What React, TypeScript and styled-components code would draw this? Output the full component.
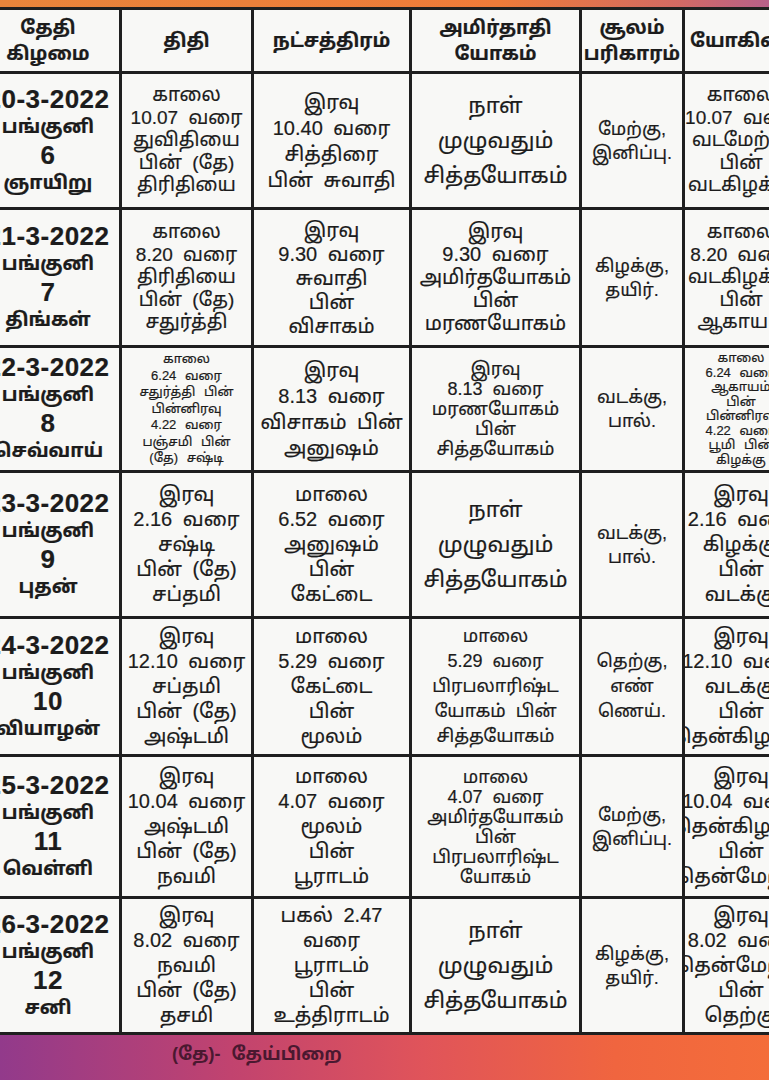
import React from 'react';
import styled, { createGlobalStyle } from 'styled-components';

const GlobalStyle = createGlobalStyle`
  html, body {
    margin: 0;
    padding: 0;
    background: #ffffff;
  }
  body {
    font-family: "Liberation Sans", "Noto Sans Tamil", "Lohit Tamil", "Noto Sans", sans-serif;
  }
`;

const Page = styled.div`
  display: flex;
  flex-direction: column;
  width: 769px;
  height: 1080px;
  overflow: hidden;
  background: #ffffff;
`;

const TopBand = styled.div`
  flex: none;
  height: 7px;
  background: linear-gradient(90deg, #e9853b 0%, #ef7b39 65%, #d36a63 88%, #b8608a 100%);
`;

// the printed table is cropped on both sides, so the frame clips it
const Frame = styled.div`
  flex: none;
  overflow: hidden;
`;

const Grid = styled.div`
  display: grid;
  grid-template-columns: 142px 129px 155px 167px 100px 112px;
  grid-template-rows: 61px 133px 135px 122px 143px 135px 139px 133px;
  gap: 3px;
  padding: 3px;
  width: max-content;
  margin-left: -26px;
  background: #1f1f1f;
`;

const Cell = styled.div<{ $size?: number; $lh?: number; $bold?: boolean }>`
  display: flex;
  flex-direction: column;
  align-items: center;
  justify-content: center;
  background: #f8f8f6;
  color: #1c1c1c;
  text-align: center;
  white-space: nowrap;
  overflow: hidden;
  font-size: ${(p) => p.$size ?? 19}px;
  line-height: ${(p) => p.$lh ?? 22.5}px;
  font-weight: ${(p) => (p.$bold ? 700 : 400)};
  word-spacing: 5px;
  -webkit-text-stroke: 0.2px #1c1c1c;
`;

const HeadCell = styled(Cell)`
  font-size: 19px;
  line-height: 26px;
  font-weight: 700;
  word-spacing: 0;
`;

const DateLine = styled.span<{ $big?: boolean }>`
  font-size: ${(p) => (p.$big ? 26 : 19)}px;
  line-height: 28px;
  font-weight: 700;
  letter-spacing: ${(p) => (p.$big ? 0.5 : 0)}px;
`;

const Footer = styled.footer`
  flex: 1;
  display: flex;
  align-items: center;
  padding-left: 172px;
  background: linear-gradient(90deg, #923a8b 0%, #c1436f 30%, #e0545a 55%, #f0653f 80%, #f46d3a 100%);
`;

const Legend = styled.span`
  font-size: 18px;
  font-weight: 700;
  color: #4a1830;
  word-spacing: 6px;
  padding-bottom: 4px;
`;

type Entry = { lines: string[]; size?: number; lh?: number };

type Day = {
  date: string;
  month: string;
  num: string;
  weekday: string;
  cells: Entry[];
};

const headers: string[][] = [
  ['தேதி', 'கிழமை'],
  ['திதி'],
  ['நட்சத்திரம்'],
  ['அமிர்தாதி', 'யோகம்'],
  ['சூலம்', 'பரிகாரம்'],
  ['யோகினி'],
];

const days: Day[] = [
  {
    date: '20-3-2022',
    month: 'பங்குனி',
    num: '6',
    weekday: 'ஞாயிறு',
    cells: [
      { lines: ['காலை', '10.07 வரை', 'துவிதியை', 'பின் (தே)', 'திரிதியை'] },
      { lines: ['இரவு', '10.40 வரை', 'சித்திரை', 'பின் சுவாதி'], size: 20, lh: 26 },
      { lines: ['நாள்', 'முழுவதும்', 'சித்தயோகம்'], size: 22, lh: 35 },
      { lines: ['மேற்கு,', 'இனிப்பு.'], size: 18, lh: 24 },
      { lines: ['காலை', '10.07 வரை', 'வடமேற்கு', 'பின்', 'வடகிழக்கு'] },
    ],
  },
  {
    date: '21-3-2022',
    month: 'பங்குனி',
    num: '7',
    weekday: 'திங்கள்',
    cells: [
      { lines: ['காலை', '8.20 வரை', 'திரிதியை', 'பின் (தே)', 'சதுர்த்தி'] },
      { lines: ['இரவு', '9.30 வரை', 'சுவாதி', 'பின்', 'விசாகம்'], size: 20, lh: 24 },
      { lines: ['இரவு', '9.30 வரை', 'அமிர்தயோகம்', 'பின்', 'மரணயோகம்'], size: 20, lh: 23 },
      { lines: ['கிழக்கு,', 'தயிர்.'], size: 18, lh: 24 },
      { lines: ['காலை', '8.20 வரை', 'வடகிழக்கு', 'பின்', 'ஆகாயம்'] },
    ],
  },
  {
    date: '22-3-2022',
    month: 'பங்குனி',
    num: '8',
    weekday: 'செவ்வாய்',
    cells: [
      {
        lines: ['காலை', '6.24 வரை', 'சதுர்த்தி பின்', 'பின்னிரவு', '4.22 வரை', 'பஞ்சமி பின்', '(தே) சஷ்டி'],
        size: 13,
        lh: 16.5,
      },
      { lines: ['இரவு', '8.13 வரை', 'விசாகம் பின்', 'அனுஷம்'], size: 20, lh: 26 },
      { lines: ['இரவு', '8.13 வரை', 'மரணயோகம்', 'பின்', 'சித்தயோகம்'], size: 18, lh: 20 },
      { lines: ['வடக்கு,', 'பால்.'], size: 18, lh: 24 },
      {
        lines: ['காலை', '6.24 வரை', 'ஆகாயம்', 'பின்', 'பின்னிரவு', '4.22 வரை', 'பூமி பின்', 'கிழக்கு'],
        size: 13,
        lh: 14.5,
      },
    ],
  },
  {
    date: '23-3-2022',
    month: 'பங்குனி',
    num: '9',
    weekday: 'புதன்',
    cells: [
      { lines: ['இரவு', '2.16 வரை', 'சஷ்டி', 'பின் (தே)', 'சப்தமி'], size: 20, lh: 25 },
      { lines: ['மாலை', '6.52 வரை', 'அனுஷம்', 'பின்', 'கேட்டை'], size: 20, lh: 25 },
      { lines: ['நாள்', 'முழுவதும்', 'சித்தயோகம்'], size: 22, lh: 35 },
      { lines: ['வடக்கு,', 'பால்.'], size: 18, lh: 24 },
      { lines: ['இரவு', '2.16 வரை', 'கிழக்கு', 'பின்', 'வடக்கு'], size: 20, lh: 25 },
    ],
  },
  {
    date: '24-3-2022',
    month: 'பங்குனி',
    num: '10',
    weekday: 'வியாழன்',
    cells: [
      { lines: ['இரவு', '12.10 வரை', 'சப்தமி', 'பின் (தே)', 'அஷ்டமி'], size: 20, lh: 25 },
      { lines: ['மாலை', '5.29 வரை', 'கேட்டை', 'பின்', 'மூலம்'], size: 20, lh: 25 },
      { lines: ['மாலை', '5.29 வரை', 'பிரபலாரிஷ்ட', 'யோகம் பின்', 'சித்தயோகம்'], size: 18, lh: 25 },
      { lines: ['தெற்கு,', 'எண்', 'ணெய்.'], size: 18, lh: 25 },
      { lines: ['இரவு', '12.10 வரை', 'வடக்கு', 'பின்', 'தென்கிழக்கு'], size: 20, lh: 25 },
    ],
  },
  {
    date: '25-3-2022',
    month: 'பங்குனி',
    num: '11',
    weekday: 'வெள்ளி',
    cells: [
      { lines: ['இரவு', '10.04 வரை', 'அஷ்டமி', 'பின் (தே)', 'நவமி'], size: 20, lh: 25 },
      { lines: ['மாலை', '4.07 வரை', 'மூலம்', 'பின்', 'பூராடம்'], size: 20, lh: 25 },
      { lines: ['மாலை', '4.07 வரை', 'அமிர்தயோகம்', 'பின்', 'பிரபலாரிஷ்ட', 'யோகம்'], size: 18, lh: 20 },
      { lines: ['மேற்கு,', 'இனிப்பு.'], size: 18, lh: 24 },
      { lines: ['இரவு', '10.04 வரை', 'தென்கிழக்கு', 'பின்', 'தென்மேற்கு'], size: 20, lh: 25 },
    ],
  },
  {
    date: '26-3-2022',
    month: 'பங்குனி',
    num: '12',
    weekday: 'சனி',
    cells: [
      { lines: ['இரவு', '8.02 வரை', 'நவமி', 'பின் (தே)', 'தசமி'], size: 20, lh: 25 },
      { lines: ['பகல் 2.47', 'வரை', 'பூராடம்', 'பின்', 'உத்திராடம்'], size: 20, lh: 25 },
      { lines: ['நாள்', 'முழுவதும்', 'சித்தயோகம்'], size: 22, lh: 35 },
      { lines: ['கிழக்கு,', 'தயிர்.'], size: 18, lh: 24 },
      { lines: ['இரவு', '8.02 வரை', 'தென்மேற்கு', 'பின்', 'தெற்கு'], size: 20, lh: 25 },
    ],
  },
];

const App = (): JSX.Element => {
  return (
    <>
      <GlobalStyle />
      <Page>
        <TopBand />
        <Frame>
          <Grid>
            {headers.map((h, i) => (
              <HeadCell key={`h${i}`}>
                {h.map((line) => (
                  <span key={line}>{line}</span>
                ))}
              </HeadCell>
            ))}
            {days.map((d) => (
              <React.Fragment key={d.date}>
                <Cell $bold>
                  <DateLine $big>{d.date}</DateLine>
                  <DateLine>{d.month}</DateLine>
                  <DateLine $big>{d.num}</DateLine>
                  <DateLine>{d.weekday}</DateLine>
                </Cell>
                {d.cells.map((c, i) => (
                  <Cell key={i} $size={c.size} $lh={c.lh}>
                    {c.lines.map((line, j) => (
                      <span key={j}>{line}</span>
                    ))}
                  </Cell>
                ))}
              </React.Fragment>
            ))}
          </Grid>
        </Frame>
        <Footer>
          <Legend>(தே)- தேய்பிறை</Legend>
        </Footer>
      </Page>
    </>
  );
};

export default App;
